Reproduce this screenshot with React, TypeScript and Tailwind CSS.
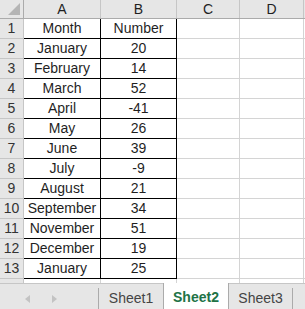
const rows: [string, string][] = [
  ["Month", "Number"],
  ["January", "20"],
  ["February", "14"],
  ["March", "52"],
  ["April", "-41"],
  ["May", "26"],
  ["June", "39"],
  ["July", "-9"],
  ["August", "21"],
  ["September", "34"],
  ["November", "51"],
  ["December", "19"],
  ["January", "25"],
];

const font = { fontFamily: '"Liberation Sans", Arial, sans-serif' };

export default function App() {
  return (
    <div className="w-[305px] h-[309px] bg-white overflow-hidden flex flex-col text-[14px] text-[#1f1f1f]" style={font}>
      {/* column headers */}
      <div className="flex h-[19px] shrink-0 bg-[#e6e6e6] border-b border-[#ababab]">
        <div className="w-[24px] shrink-0 border-r border-[#ababab] relative">
          <svg width="12" height="12" className="absolute right-[3px] bottom-[3px]">
            <polygon points="12,0 12,12 0,12" fill="#b5b5b5" />
          </svg>
        </div>
        <div className="w-[77px] shrink-0 border-r border-[#c6c6c6] text-center leading-[18px]">A</div>
        <div className="w-[76px] shrink-0 border-r border-[#c6c6c6] text-center leading-[18px]">B</div>
        <div className="w-[63px] shrink-0 border-r border-[#c6c6c6] text-center leading-[18px]">C</div>
        <div className="w-[64px] shrink-0 border-r border-[#c6c6c6] text-center leading-[18px]">D</div>
        <div className="flex-1" />
      </div>

      {rows.map(([m, n], i) => (
        <div key={i} className="flex h-[20px] shrink-0">
          <div className="w-[24px] shrink-0 bg-[#e6e6e6] border-r border-b border-[#c6c6c6] text-center leading-[19px] text-[#333]">
            {i + 1}
          </div>
          <div className="w-[77px] shrink-0 border-r border-b border-black text-center leading-[19px]">{m}</div>
          <div className="w-[76px] shrink-0 border-r border-b border-black text-center leading-[19px]">{n}</div>
          <div className="w-[63px] shrink-0 border-r border-b border-[#d4d4d4]" />
          <div className="w-[64px] shrink-0 border-r border-b border-[#d4d4d4]" />
          <div className="flex-1 border-b border-[#d4d4d4]" />
        </div>
      ))}

      {/* partial row 14 */}
      <div className="flex h-[4px] shrink-0">
        <div className="w-[24px] shrink-0 bg-[#e6e6e6] border-r border-[#c6c6c6]" />
        <div className="w-[77px] shrink-0 border-r border-[#d4d4d4]" />
        <div className="w-[76px] shrink-0 border-r border-[#d4d4d4]" />
        <div className="w-[63px] shrink-0 border-r border-[#d4d4d4]" />
        <div className="w-[64px] shrink-0 border-r border-[#d4d4d4]" />
      </div>

      {/* sheet tabs */}
      <div className="flex-1 flex bg-[#e6e6e6] border-t border-[#c6c6c6]">
        <div className="w-[98px] shrink-0 flex items-center gap-[22px] pl-[25px]">
          <svg width="5" height="8"><polygon points="5,0 5,8 0,4" fill="#c3c3c3" /></svg>
          <svg width="5" height="8"><polygon points="0,0 0,8 5,4" fill="#c3c3c3" /></svg>
        </div>
        <div className="w-[65px] shrink-0 border-l border-[#ababab] my-[4px] flex items-center justify-center text-[#444]">
          Sheet1
        </div>
        <div className="w-[66px] shrink-0 -mt-[1px] bg-white border-x border-[#ababab] border-b-[2px] border-b-[#217346] flex items-center justify-center font-bold text-[#217346]">
          Sheet2
        </div>
        <div className="w-[64px] shrink-0 border-r border-[#ababab] my-[4px] flex items-center justify-center text-[#444]">
          Sheet3
        </div>
      </div>
    </div>
  );
}
